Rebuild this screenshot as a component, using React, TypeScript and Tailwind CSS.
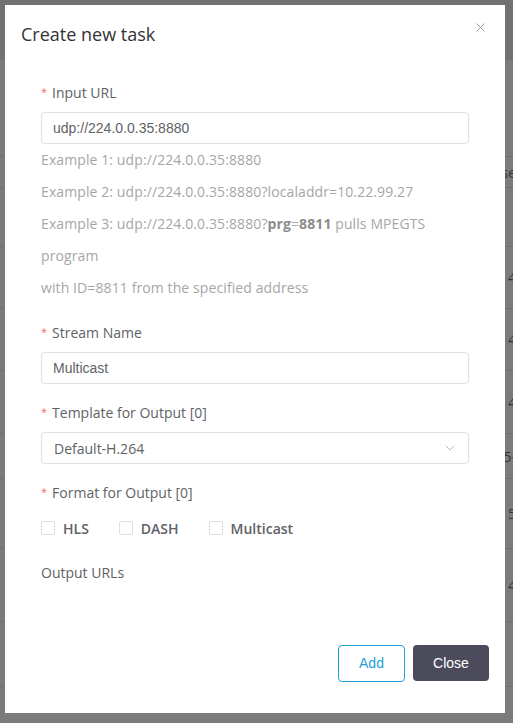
import { ChevronDown, X } from 'lucide-react'

const bgRows = [
  { h: 60, text: '', dark: true },
  { h: 97, text: '' },
  { h: 31, text: 'se' },
  { h: 59, text: '' },
  { h: 62, text: '4' },
  { h: 62, text: '4' },
  { h: 63, text: '4' },
  { h: 45, text: '5-' },
  { h: 70, text: '5' },
  { h: 73, text: '4' },
  { h: 65, text: '' },
  { h: 40, text: '' },
]

function Label({ text, required = true }: { text: string; required?: boolean }) {
  return (
    <div className="h-[20px] leading-[20px] text-[14px] text-[#606266] mb-[9px] flex items-center">
      {required && <span className="text-[#f56c6c] text-[11px] mr-[5px] mt-[-3px]">*</span>}
      {text}
    </div>
  )
}

function TextInput({ value }: { value: string }) {
  return (
    <div className="h-[32px] border border-[#dcdfe6] rounded-[4px] px-[11px] flex items-center text-[14px] text-[#606266] font-['Liberation_Sans',Arial,sans-serif]">
      {value}
    </div>
  )
}

function Check({ label }: { label: string }) {
  return (
    <label className="flex items-center gap-[8px]">
      <span className="w-[14px] h-[14px] border border-[#dcdfe6] rounded-[2px] bg-white" />
      <span className="text-[14px] font-semibold text-[#606266]">{label}</span>
    </label>
  )
}

export default function App() {
  return (
    <div className="relative w-[513px] h-[723px] overflow-hidden bg-[#7b7b7b] font-['Open_Sans',sans-serif]">
      {/* page behind the overlay */}
      <div className="flex flex-col">
        {bgRows.map((r, i) => (
          <div
            key={i}
            className={`flex items-center justify-end border-b border-[#6f6f6f] text-[14px] text-[#333] ${r.dark ? 'bg-[#717171]' : ''}`}
            style={{ height: r.h }}
          >
            <span className="translate-x-[3px]">{r.text}</span>
          </div>
        ))}
      </div>

      {/* dialog */}
      <div className="absolute left-[5px] top-[5px] w-[500px] h-[708px] bg-white flex flex-col">
        <div className="flex items-start justify-between pl-[16px] pr-[17px] pt-[17px]">
          <h2 className="text-[18px] leading-[24px] text-[#333]">Create new task</h2>
          <X className="w-[15px] h-[15px] text-[#909399] mt-[-2px]" strokeWidth={1.4} />
        </div>

        <div className="px-[36px] pt-[37px] flex-1">
          <Label text="Input URL" />
          <TextInput value="udp://224.0.0.35:8880" />
          <div className="text-[14px] leading-[32px] text-[#a6a6a6] tracking-[0.1px]">
            <div>Example 1: udp://224.0.0.35:8880</div>
            <div>Example 2: udp://224.0.0.35:8880?localaddr=10.22.99.27</div>
            <div>
              Example 3: udp://224.0.0.35:8880?<b className="font-bold text-[#8c8c8c]">prg</b>=
              <b className="font-bold text-[#8c8c8c]">8811</b> pulls MPEGTS
            </div>
            <div>program</div>
            <div>with ID=8811 from the specified address</div>
          </div>

          <div className="mt-[19px]">
            <Label text="Stream Name" />
            <TextInput value="Multicast" />
          </div>

          <div className="mt-[19px]">
            <Label text="Template for Output [0]" />
            <div className="h-[32px] border border-[#dcdfe6] rounded-[4px] pl-[12px] pr-[10px] flex items-center justify-between text-[14px] text-[#606266]">
              <span>Default-H.264</span>
              <ChevronDown className="w-[16px] h-[16px] text-[#b4b7bd]" strokeWidth={1.4} />
            </div>
          </div>

          <div className="mt-[19px]">
            <Label text="Format for Output [0]" />
            <div className="flex items-center gap-[30px] h-[32px]">
              <Check label="HLS" />
              <Check label="DASH" />
              <Check label="Multicast" />
            </div>
          </div>

          <div className="mt-[19px] h-[20px] leading-[20px] text-[14px] text-[#606266]">Output URLs</div>
        </div>

        <div className="flex justify-end gap-[8px] pr-[16px] pb-[31px]">
          <button className="w-[67px] h-[37px] border border-[#1fa0d8] rounded-[4px] text-[14px] text-[#1fa0d8] bg-white font-['Liberation_Sans',Arial,sans-serif]">
            Add
          </button>
          <button className="w-[76px] h-[36px] rounded-[4px] text-[14px] text-white bg-[#4b4b5c] font-['Liberation_Sans',Arial,sans-serif]">
            Close
          </button>
        </div>
      </div>
    </div>
  )
}
